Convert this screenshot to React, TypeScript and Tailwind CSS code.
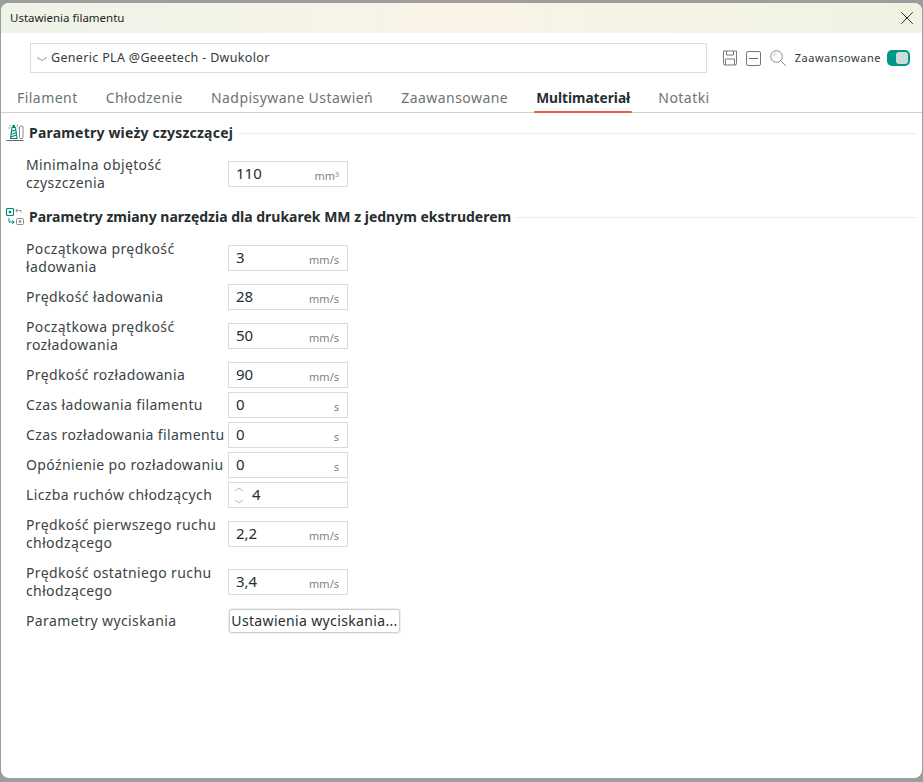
import { X } from "lucide-react";

const font = "font-['Noto_Sans','Open_Sans',sans-serif]";

const tabs = ["Filament", "Chłodzenie", "Nadpisywane Ustawień", "Zaawansowane", "Multimateriał", "Notatki"];

const rows = [
  { label: "Początkowa prędkość ładowania", value: "3", unit: "mm/s", gap: "mt-0" },
  { label: "Prędkość ładowania", value: "28", unit: "mm/s", gap: "mt-2" },
  { label: "Początkowa prędkość rozładowania", value: "50", unit: "mm/s", gap: "mt-2" },
  { label: "Prędkość rozładowania", value: "90", unit: "mm/s", gap: "mt-2" },
  { label: "Czas ładowania filamentu", value: "0", unit: "s", gap: "mt-1" },
  { label: "Czas rozładowania filamentu", value: "0", unit: "s", gap: "mt-1" },
  { label: "Opóźnienie po rozładowaniu", value: "0", unit: "s", gap: "mt-1" },
  { label: "Liczba ruchów chłodzących", value: "4", unit: "", gap: "mt-1", spin: true },
  { label: "Prędkość pierwszego ruchu chłodzącego", value: "2,2", unit: "mm/s", gap: "mt-2" },
  { label: "Prędkość ostatniego ruchu chłodzącego", value: "3,4", unit: "mm/s", gap: "mt-3" },
];

function TowerIcon() {
  return (
    <svg width="18" height="18" viewBox="0 0 18 18" fill="none" className="shrink-0">
      <path d="M6 3.500h3.500l1.500 11h-6.500z" stroke="#00897b" strokeWidth="1.100" />
      <path d="M6.500 1h2.500v2.500h-2.500z" fill="#00897b" />
      <path d="M5.500 7.500l4.500-1.500M5 10.500l5.500-2M4.800 13l6-2.200" stroke="#00897b" strokeWidth="1.200" />
      <path d="M3.500 1l1.500 1.200M12 1l-1.500 1.200M2.500 4h1.500M11.500 4h1" stroke="#00897b" strokeWidth="0.8" />
      <rect x="13.500" y="2" width="3.500" height="12.500" rx="1" stroke="#8a8a8a" strokeWidth="1" />
      <path d="M0.500 16.500h17" stroke="#5f6b6b" strokeWidth="1" />
    </svg>
  );
}

function SwapIcon() {
  return (
    <svg width="18" height="18" viewBox="0 0 18 18" fill="none" className="shrink-0">
      <rect x="0.500" y="0.500" width="7" height="7" rx="1" stroke="#00897b" strokeWidth="1.100" />
      <rect x="2.800" y="2.800" width="2.400" height="2.400" fill="#00897b" />
      <path d="M15 4.500v-2h-5M11.500 0.800l-1.800 1.700 1.800 1.700" stroke="#8a8a8a" strokeWidth="0.9" />
      <rect x="10.500" y="10.500" width="7" height="6" rx="1" stroke="#8a8a8a" strokeWidth="1" />
      <rect x="12.800" y="12.300" width="2.400" height="2.400" fill="#8a8a8a" />
      <path d="M3 10v4h5M6.200 12.200l2 1.800-2 1.800" stroke="#00897b" strokeWidth="1" />
    </svg>
  );
}

function Field({ value, unit, spin }: { value: string; unit: string; spin?: boolean }) {
  return (
    <div className="flex h-[26px] w-[120px] shrink-0 items-center border border-[#dbdbdb] bg-white">
      {spin ? (
        <div className="ml-[5px] mr-[8px] flex w-[10px] flex-col items-center gap-[7px]">
          <svg width="10" height="5" viewBox="0 0 10 5" fill="none"><path d="M1 4l4-3 4 3" stroke="#a5a5a5" strokeWidth="0.8" /></svg>
          <svg width="10" height="5" viewBox="0 0 10 5" fill="none"><path d="M1 1l4 3 4-3" stroke="#a5a5a5" strokeWidth="0.8" /></svg>
        </div>
      ) : (
        <div className="w-[7px]" />
      )}
      <span className="-mt-px text-[15px] leading-none text-[#262e30]">{value}</span>
      <span className="ml-auto mr-[8px] mt-[3px] text-[11px] leading-none text-[#7f7f7f]">
        {unit === "mm³" ? (
          <>
            mm<sup className="text-[7px]">3</sup>
          </>
        ) : (
          unit
        )}
      </span>
    </div>
  );
}

function Row({ label, value, unit, spin, gap }: { label: string; value: string; unit: string; spin?: boolean; gap: string }) {
  return (
    <div className={`flex items-center ${gap}`}>
      <div className="w-[202px] shrink-0 text-[14px] leading-[18px] tracking-[0.38px] text-[#3b4446]">{label}</div>
      <Field value={value} unit={unit} spin={spin} />
    </div>
  );
}

function SectionTitle({ icon, title, tracking }: { icon: React.ReactNode; title: string; tracking: string }) {
  return (
    <div className="flex items-center">
      {icon}
      <h2 className={`ml-[5px] whitespace-nowrap text-[14px] font-bold leading-[20px] text-[#262e30] ${tracking}`}>{title}</h2>
      <div className="ml-[5px] h-px flex-1 bg-[#ececec]" />
    </div>
  );
}

export default function App() {
  return (
    <div className={`h-[782px] w-[923px] overflow-hidden bg-[#9d9d9d] pb-[4px] pl-px pr-px pt-[3px] ${font}`}>
      <div className="flex h-full flex-col overflow-hidden rounded-lg bg-white">
        <div className="flex h-[30px] shrink-0 items-center justify-between bg-gradient-to-r from-[#eef3e8] via-[#faf3e8] to-[#eff3e4] pl-[9px] pr-[4px]">
          <span className="text-[11.5px] text-[#1e2426]">Ustawienia filamentu</span>
          <X size={22} strokeWidth={1} className="text-[#222]" />
        </div>

        <div className="mt-[10px] flex h-[30px] items-center pl-[29px] pr-[12px]">
          <div className="flex h-[30px] w-[677px] items-center border border-[#dcdcdc] px-[5px]">
            <svg width="12" height="6" viewBox="0 0 12 6" fill="none" className="mt-px">
              <path d="M1 1.500l5 3 5-3" stroke="#8a8a8a" strokeWidth="0.9" />
            </svg>
            <span className="ml-[3px] text-[12.5px] tracking-[0.33px] text-[#323a3c]">Generic PLA @Geeetech - Dwukolor</span>
          </div>
          <svg width="16" height="16" viewBox="0 0 16 16" fill="none" className="ml-[15px]">
            <path d="M1.500 1h13v12.500a1.500 1.500 0 0 1-1.500 1.500h-10a1.500 1.500 0 0 1-1.500-1.500z" stroke="#777" strokeWidth="1" />
            <path d="M4.500 1v4h7v-4M3.500 15v-6h9v6" stroke="#777" strokeWidth="1" />
          </svg>
          <div className="ml-[8px] flex h-[15px] w-[15px] items-center justify-center rounded-[2px] border border-[#777]">
            <div className="h-px w-[9px] bg-[#666]" />
          </div>
          <svg width="16" height="16" viewBox="0 0 16 16" fill="none" className="ml-[9px]">
            <circle cx="6.500" cy="6.500" r="5.800" stroke="#888" strokeWidth="1" />
            <path d="M3.200 6.500a3.300 3.300 0 0 1 3.300-3.300" stroke="#bbb" strokeWidth="0.8" />
            <path d="M10.800 10.800l5 5" stroke="#888" strokeWidth="1" />
          </svg>
          <span className="ml-[9px] text-[11px] tracking-[0.55px] text-[#30383a]">Zaawansowane</span>
          <div className="ml-[6px] flex h-[16px] w-[23px] items-center justify-end rounded-[5px] bg-[#009688] pr-[2px]">
            <div className="h-[12px] w-[12px] rounded-[3px] bg-[#cfdcd9]" />
          </div>
        </div>

        <div className="mt-[10px] flex h-[30px] gap-[24px] border-b border-[#d0d0d0] pl-[14px]">
          {tabs.map((tab) => {
            const active = tab === "Multimateriał";
            return (
              <div key={tab} className="relative px-[2px] pt-[2px]">
                <span className={active ? "text-[13.7px] font-bold text-[#262e30]" : "text-[14px] tracking-[0.45px] text-[#6c7375]"}>{tab}</span>
                {active && <div className="absolute -bottom-px left-0 right-0 h-[2px] rounded-sm bg-[#e2603f]" />}
              </div>
            );
          })}
        </div>

        <div className="pl-[5px] pr-[6px]">
          <div className="mt-[10px]">
            <SectionTitle icon={<TowerIcon />} title="Parametry wieży czyszczącej" tracking="tracking-[0.2px]" />
          </div>
          <div className="mt-[13px] pl-[20px]">
            <Row label="Minimalna objętość czyszczenia" value="110" unit="mm³" gap="mt-0" />
          </div>
          <div className="mt-[15px]">
            <SectionTitle icon={<SwapIcon />} title="Parametry zmiany narzędzia dla drukarek MM z jednym ekstruderem" tracking="tracking-normal" />
          </div>
          <div className="mt-[13px] pl-[20px]">
            {rows.map((row) => (
              <Row key={row.label} {...row} />
            ))}
            <div className="mt-[9px] flex items-center">
              <div className="w-[202px] shrink-0 text-[14px] leading-[18px] tracking-[0.38px] text-[#3b4446]">Parametry wyciskania</div>
              <button className="ml-px h-[24px] w-[171px] whitespace-nowrap rounded-[3px] border border-[#cfcfcf] bg-white text-[14px] leading-none tracking-[0.35px] text-[#262e30] shadow-[0_0_0_1px_#eeeeee]">
                Ustawienia wyciskania...
              </button>
            </div>
          </div>
        </div>
      </div>
    </div>
  );
}
